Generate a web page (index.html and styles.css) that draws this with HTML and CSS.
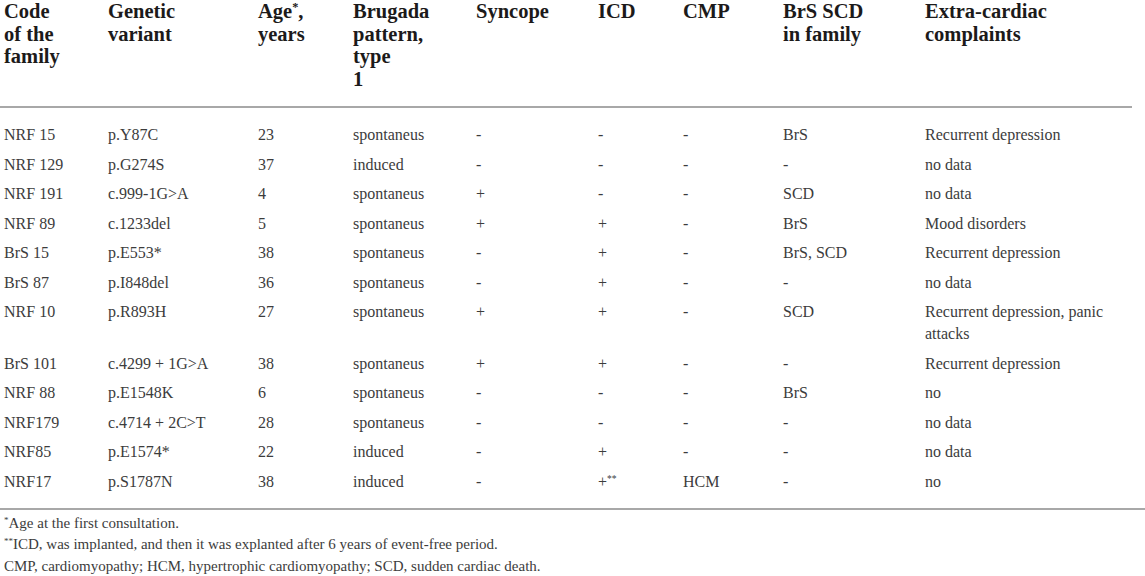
FILE: index.html
```
<!DOCTYPE html>
<html lang="en">
    <head>
        <meta charset="utf-8"/>
        <title>Families with genetic variants</title>
        <link rel="stylesheet" href="styles.css">
    </head>
    <body>
        <div class="wrap">
            <table class="fam">
                <colgroup>
                    <col class="c1"><col class="c2"><col class="c3"><col class="c4"><col class="c5">
                    <col class="c6"><col class="c7"><col class="c8"><col class="c9">
                </colgroup>
                <thead>
                    <tr>
                        <th>Code<br>of the<br>family</th>
                        <th>Genetic<br>variant</th>
                        <th>Age<sup>*</sup>,<br>years</th>
                        <th>Brugada<br>pattern,<br>type<br>1</th>
                        <th>Syncope</th>
                        <th>ICD</th>
                        <th>CMP</th>
                        <th>BrS SCD<br>in family</th>
                        <th>Extra-cardiac<br>complaints</th>
                    </tr>
                </thead>
                <tbody>
                    <tr><td>NRF 15</td><td>p.Y87C</td><td>23</td><td>spontaneus</td><td>-</td><td>-</td><td>-</td><td>BrS</td><td>Recurrent depression</td></tr>
                    <tr><td>NRF 129</td><td>p.G274S</td><td>37</td><td>induced</td><td>-</td><td>-</td><td>-</td><td>-</td><td>no data</td></tr>
                    <tr><td>NRF 191</td><td>c.999-1G&gt;A</td><td>4</td><td>spontaneus</td><td>+</td><td>-</td><td>-</td><td>SCD</td><td>no data</td></tr>
                    <tr><td>NRF 89</td><td>c.1233del</td><td>5</td><td>spontaneus</td><td>+</td><td>+</td><td>-</td><td>BrS</td><td>Mood disorders</td></tr>
                    <tr><td>BrS 15</td><td>p.E553*</td><td>38</td><td>spontaneus</td><td>-</td><td>+</td><td>-</td><td>BrS, SCD</td><td>Recurrent depression</td></tr>
                    <tr><td>BrS 87</td><td>p.I848del</td><td>36</td><td>spontaneus</td><td>-</td><td>+</td><td>-</td><td>-</td><td>no data</td></tr>
                    <tr><td>NRF 10</td><td>p.R893H</td><td>27</td><td>spontaneus</td><td>+</td><td>+</td><td>-</td><td>SCD</td><td>Recurrent depression, panic attacks</td></tr>
                    <tr><td>BrS 101</td><td>c.4299 + 1G&gt;A</td><td>38</td><td>spontaneus</td><td>+</td><td>+</td><td>-</td><td>-</td><td>Recurrent depression</td></tr>
                    <tr><td>NRF 88</td><td>p.E1548K</td><td>6</td><td>spontaneus</td><td>-</td><td>-</td><td>-</td><td>BrS</td><td>no</td></tr>
                    <tr><td>NRF179</td><td>c.4714 + 2C&gt;T</td><td>28</td><td>spontaneus</td><td>-</td><td>-</td><td>-</td><td>-</td><td>no data</td></tr>
                    <tr><td>NRF85</td><td>p.E1574*</td><td>22</td><td>induced</td><td>-</td><td>+</td><td>-</td><td>-</td><td>no data</td></tr>
                    <tr><td>NRF17</td><td>p.S1787N</td><td>38</td><td>induced</td><td>-</td><td>+<sup>**</sup></td><td>HCM</td><td>-</td><td>no</td></tr>
                </tbody>
            </table>
            <div class="notes">
                <p><sup>*</sup>Age at the first consultation.</p>
                <p><sup>**</sup>ICD, was implanted, and then it was explanted after 6 years of event-free period.</p>
                <p>CMP, cardiomyopathy; HCM, hypertrophic cardiomyopathy; SCD, sudden cardiac death.</p>
            </div>
        </div>
    </body>
</html>
```

FILE: styles.css
```
body {
    margin: 0;
    background: #ffffff;
    font-family: "Liberation Serif", "Times New Roman", serif;
    color: #3c3c3c;
}

.wrap {
    width: 1145px;
}

.fam {
    width: 1132px;
    border-collapse: collapse;
    table-layout: fixed;
}

.c1 { width: 104px; }
.c2 { width: 150px; }
.c3 { width: 95px; }
.c4 { width: 123px; }
.c5 { width: 122px; }
.c6 { width: 85px; }
.c7 { width: 100px; }
.c8 { width: 142px; }
.c9 { width: 211px; }

.fam th {
    text-align: left;
    vertical-align: top;
    font-size: 20.5px;
    line-height: 22.6px;
    font-weight: bold;
    color: #1c1a1a;
    padding: 0 4px 16px 4px;
    border-bottom: 2px solid #a8a8a8;
}

.fam td {
    vertical-align: top;
    font-size: 16px;
    line-height: 22px;
    padding: 3.75px 4px;
}

.fam tbody tr:first-child td {
    padding-top: 16px;
}

.fam tbody tr:last-child td {
    padding-bottom: 15px;
}

sup {
    font-size: 0.6em;
    line-height: 0;
    vertical-align: 0.55em;
}

.notes {
    border-top: 2px solid #a8a8a8;
    padding: 3px 4px 0 4px;
    font-size: 15px;
    line-height: 21.5px;
}

.notes p {
    margin: 0;
}
```
